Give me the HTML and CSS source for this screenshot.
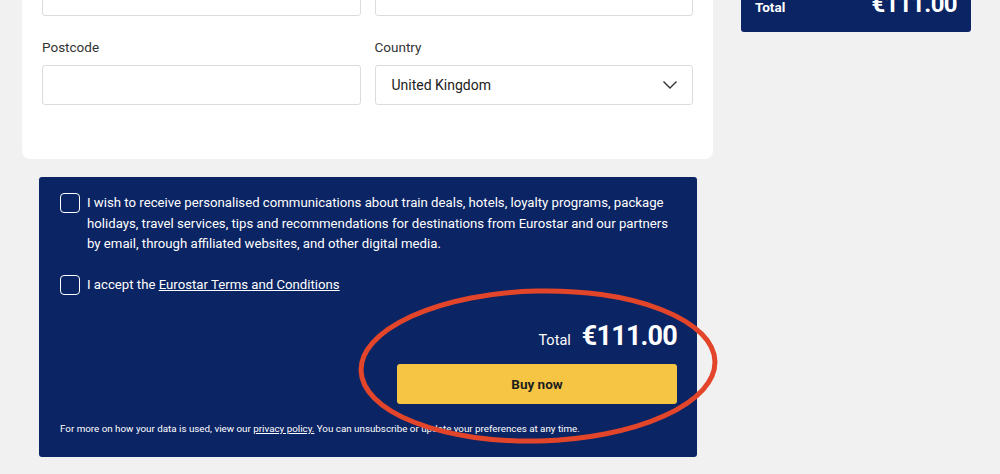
FILE: index.html
```html
<!DOCTYPE html>
<html lang="en">
<head>
    <meta charset="UTF-8">
    <meta name="viewport" content="width=device-width, initial-scale=1.0">
    <title>Checkout | Payment details</title>
    <link rel="stylesheet" href="styles.css">
</head>
<body>

    <div class="page">
        <div class="main-col">
            <div class="card">
                <div class="field-row">
                    <div class="field">
                        <label>Town / City</label>
                        <input type="text">
                    </div>
                    <div class="field">
                        <label>County</label>
                        <input type="text">
                    </div>
                </div>
                <div class="field-row">
                    <div class="field">
                        <label>Postcode</label>
                        <input type="text">
                    </div>
                    <div class="field">
                        <label>Country</label>
                        <div class="select">
                            <span>United Kingdom</span>
                            <svg width="16" height="10" viewBox="0 0 16 10"><path d="M1.5 1.5 L8 8 L14.5 1.5" fill="none" stroke="#333" stroke-width="1.4"/></svg>
                        </div>
                    </div>
                </div>
            </div>

            <div class="confirm">
                <label class="check">
                    <span class="box"></span>
                    <span>I wish to receive personalised communications about train deals, hotels, loyalty programs, package holidays, travel services, tips and recommendations for destinations from Eurostar and our partners by email, through affiliated websites, and other digital media.</span>
                </label>
                <label class="check">
                    <span class="box"></span>
                    <span>I accept the <a href="#">Eurostar Terms and Conditions</a></span>
                </label>

                <div class="pay">
                    <div class="pay-total">
                        <span class="pay-label">Total</span>
                        <span class="pay-price">€111.00</span>
                    </div>
                    <button class="buy">Buy now</button>
                </div>

                <p class="small-print">For more on how your data is used, view our <a href="#">privacy policy.</a> You can unsubscribe or update your preferences at any time.</p>

                <!-- hand-drawn highlight round the pay button -->
                <svg class="ring" width="380" height="170" viewBox="0 0 380 170">
                    <ellipse cx="190" cy="80" rx="177" ry="75" transform="rotate(-1.5 190 80)" fill="none" stroke="#e3452b" stroke-width="5"/>
                </svg>
            </div>
        </div>

        <div class="side-col">
            <div class="summary">
                <div class="summary-total">
                    <span>Total</span>
                    <span class="summary-price">€111.00</span>
                </div>
            </div>
        </div>
    </div>

</body>
</html>
```

FILE: styles.css
```css
* { margin: 0; padding: 0; box-sizing: border-box; }
body { background: #f1f1f2; font-family: 'Roboto', 'Inter', sans-serif; color: #222; overflow: hidden; }

.page { display: flex; gap: 28px; margin: -71px 0 0 22px; }
.main-col { width: 691px; }
.side-col { width: 230px; }

.card { background: white; border-radius: 8px; padding: 20px 20px 54px; display: flex; flex-direction: column; gap: 22px; }
.field-row { display: flex; gap: 14px; }
.field { flex: 1; display: flex; flex-direction: column; gap: 9px; }
.field label { font-size: 13.5px; line-height: 18px; color: #333; }
.field input, .select { height: 40px; border: 1px solid #dcdcdc; border-radius: 3px; background: white; font-size: 14px; }
.select { display: flex; align-items: center; justify-content: space-between; padding: 0 14px 0 16px; color: #222; }

.confirm { position: relative; background: #0b2463; margin: 18px 16px 0 17px; padding: 16px 20px 21px 21px; border-radius: 3px; color: white; }
.check { display: flex; gap: 7px; font-size: 13.2px; line-height: 20.5px; margin-bottom: 20px; }
.check .box { flex: none; width: 20px; height: 20px; border: 1.5px solid white; border-radius: 4px; margin-top: 0; }
.check a, .small-print a { color: white; }

.pay { display: flex; flex-direction: column; align-items: flex-end; margin-top: 25px; }
.pay-total { display: flex; align-items: baseline; gap: 11px; }
.pay-label { font-size: 14.5px; }
.pay-price { font-size: 27px; font-weight: 700; letter-spacing: -0.8px; }
.buy { width: 280px; height: 40px; margin-top: 12px; background: #f6c544; border: none; border-radius: 3px; font-family: inherit; font-size: 13.5px; font-weight: 700; color: #1e1e1e; }

.small-print { font-size: 9.8px; line-height: 14px; margin-top: 18px; }

.ring { position: absolute; left: 309px; top: 109px; }

.summary { background: #0b2463; border-radius: 3px; color: white; padding: 14px 14px 14px; margin-top: 47px; }
.summary-total { display: flex; justify-content: space-between; align-items: baseline; }
.summary-total span { font-size: 13.5px; font-weight: 700; }
.summary-total .summary-price { font-size: 24px; letter-spacing: -0.6px; }
```
